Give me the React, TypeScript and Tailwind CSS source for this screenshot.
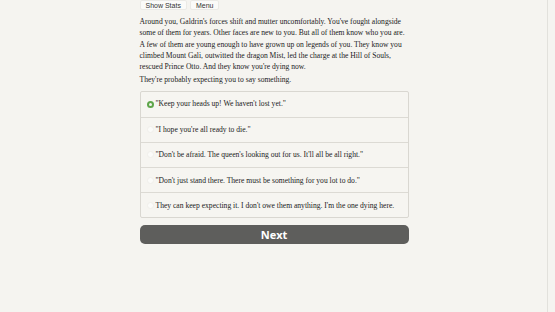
import React, { useState } from 'react';

const choices = [
  '"Keep your heads up! We haven\'t lost yet."',
  '"I hope you\'re all ready to die."',
  '"Don\'t be afraid. The queen\'s looking out for us. It\'ll all be all right."',
  '"Don\'t just stand there. There must be something for you lot to do."',
  "They can keep expecting it. I don't owe them anything. I'm the one dying here.",
];

export default function App() {
  const [selected, setSelected] = useState(0);

  return (
    <div className="flex h-[312px] w-full bg-[#f5f4f0] overflow-hidden antialiased">
      <div className="flex-1 flex justify-center">
        <div className="w-[269px] ml-[1px]">
          <div className="flex gap-[3px] font-['Liberation_Sans',sans-serif] text-[7px] text-[#333]">
            <button className="h-[10px] px-[5px] bg-[#fbfbf9] border border-[#ebeae6] rounded-[2px] leading-none">
              Show Stats
            </button>
            <button className="h-[10px] px-[5px] bg-[#fbfbf9] border border-[#ebeae6] rounded-[2px] leading-none">
              Menu
            </button>
          </div>

          <div className="font-['Liberation_Serif',serif] text-[7.6px] leading-[11.25px] text-[#222]">
            <p className="mt-[6px]">
              Around you, Galdrin's forces shift and mutter uncomfortably. You've fought alongside some
              of them for years. Other faces are new to you. But all of them know who you are. A few of
              them are young enough to have grown up on legends of you. They know you climbed Mount
              Gali, outwitted the dragon Mist, led the charge at the Hill of Souls, rescued Prince Otto.
              And they know you're dying now.
            </p>
            <p className="mt-[2px]">They're probably expecting you to say something.</p>

            <div className="mt-[5px] border border-[#d9d7d1] rounded-[2px] bg-[#f6f5f1]">
              {choices.map((c, i) => (
                <label
                  key={i}
                  onClick={() => setSelected(i)}
                  className={`flex items-center h-[25.2px] pl-[6px] gap-[2px] cursor-pointer ${
                    i > 0 ? 'border-t border-[#dcdad4]' : ''
                  }`}
                >
                  {selected === i ? (
                    <span className="w-[7px] h-[7px] rounded-full bg-[#5ea54a] flex items-center justify-center">
                      <span className="w-[3px] h-[3px] rounded-full bg-[#f2f2ee]" />
                    </span>
                  ) : (
                    <span className="w-[7px] h-[7px] rounded-full bg-[#fbfbf9] border border-[#f0efeb]" />
                  )}
                  <span>{c}</span>
                </label>
              ))}
            </div>
          </div>

          <button className="mt-[7px] w-full h-[19px] rounded-[5px] bg-[#5e5e5c] text-white font-['Open_Sans',sans-serif] font-bold text-[11px] leading-none">
            Next
          </button>
        </div>
      </div>
      <div className="w-[8px] border-l border-[#e2e1dc] bg-[#f5f4f0]" />
    </div>
  );
}
